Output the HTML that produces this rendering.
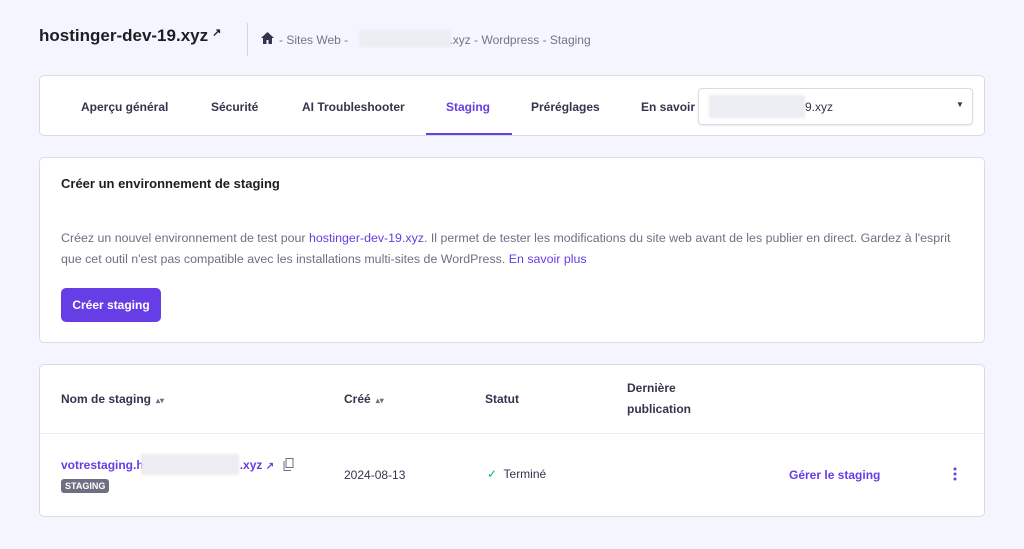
<!DOCTYPE html>
<html><head><meta charset="utf-8"><style>
*{box-sizing:border-box;margin:0;padding:0}
body{width:1024px;height:549px;background:#f4f5ff;font-family:"Liberation Sans",sans-serif;color:#2f1c6a;position:relative;overflow:hidden}
.a{position:absolute}
.card{position:absolute;left:39px;width:946px;background:#fff;border:1px solid #dadce0;border-radius:5px}
.tab{position:absolute;top:24px;font-size:12px;font-weight:bold;color:#36344d}
.p{color:#673de6}
.blur{position:absolute;background:#ececf3;filter:blur(1px)}
.th{position:absolute;font-size:12px;font-weight:bold;color:#36344d}
.sort{font-size:8px;color:#6d7081;margin-left:5px}
</style></head><body>
<div class="a" style="left:39px;top:26px;font-size:17px;font-weight:bold;color:#1d1e20">hostinger-dev-19.xyz<span style="font-size:11px;vertical-align:top;margin-left:4px">↗</span></div>
<div class="a" style="left:247px;top:23px;width:1px;height:33px;background:#d5d6dc"></div>
<svg class="a" style="left:261px;top:32px" width="13" height="12" viewBox="0 0 13 12"><path d="M6.5 0L0 6h2v6h3.5V8h2v4H11V6h2z" fill="#36344d"/></svg>
<div class="a" style="left:279px;top:33px;font-size:12px;color:#727586;white-space:nowrap">- Sites Web - <span style="display:inline-block;width:98px"></span>.xyz - Wordpress - Staging</div>
<div class="blur" style="left:359px;top:30px;width:92px;height:17px"></div>

<div class="card" style="top:75px;height:61px">
 <div class="tab" style="left:41px">Aperçu général</div>
 <div class="tab" style="left:171px">Sécurité</div>
 <div class="tab" style="left:262px">AI Troubleshooter</div>
 <div class="tab p" style="left:406px">Staging</div>
 <div class="a" style="left:386px;top:57px;width:86px;height:2px;background:#673de6"></div>
 <div class="tab" style="left:491px">Préréglages</div>
 <div class="tab" style="left:601px">En savoir p</div>
 <div class="a" style="left:658px;top:12px;width:275px;height:37px;border:1px solid #dadce0;border-radius:4px;background:#fff;box-shadow:0 1px 2px rgba(0,0,0,.08)">
  <div class="blur" style="left:10px;top:6px;width:96px;height:23px"></div>
  <div class="a" style="left:106px;top:11px;font-size:12px;color:#36344d">9.xyz</div>
  <div class="a" style="left:257px;top:11px;font-size:8px;color:#36344d">▼</div>
 </div>
</div>

<div class="card" style="top:157px;height:186px">
 <div class="a" style="left:21px;top:18px;font-size:13px;font-weight:bold;color:#1d1e20">Créer un environnement de staging</div>
 <div class="a" style="left:21px;top:70px;width:900px;font-size:12.4px;line-height:21px;color:#6d7081">Créez un nouvel environnement de test pour <span class="p">hostinger-dev-19.xyz</span>. Il permet de tester les modifications du site web avant de les publier en direct. Gardez à l'esprit que cet outil n'est pas compatible avec les installations multi-sites de WordPress. <span class="p">En savoir plus</span></div>
 <div class="a" style="left:21px;top:130px;width:100px;height:34px;background:#673de6;border-radius:5px;color:#fff;font-size:12px;font-weight:bold;text-align:center;line-height:34px">Créer staging</div>
</div>

<div class="card" style="top:364px;height:153px">
 <div class="th" style="left:21px;top:27px">Nom de staging<span class="sort">▴▾</span></div>
 <div class="th" style="left:304px;top:27px">Créé<span class="sort">▴▾</span></div>
 <div class="th" style="left:445px;top:27px">Statut</div>
 <div class="th" style="left:587px;top:13px;line-height:21px">Dernière<br>publication</div>
 <div class="a" style="left:0;top:68px;width:944px;height:1px;background:#ececf0"></div>
 <div class="a p" style="left:21px;top:93px;font-size:12px;font-weight:bold;white-space:nowrap">votrestaging.h<span style="display:inline-block;width:96px"></span>.xyz <span style="font-size:10px">↗</span></div>
 <div class="blur" style="left:101px;top:89px;width:98px;height:21px"></div>
 <svg class="a" style="left:243px;top:93px" width="11" height="13" viewBox="0 0 11 13"><rect x="3" y=".5" width="7" height="9" fill="none" stroke="#6d7081"/><path d="M1 3v9.5h7" fill="none" stroke="#6d7081"/></svg>
 <div class="a" style="left:21px;top:114px;background:#6d7081;color:#fff;font-size:9px;font-weight:bold;padding:2px 4px;border-radius:3px">STAGING</div>
 <div class="a" style="left:304px;top:103px;font-size:12px;color:#36344d">2024-08-13</div>
 <div class="a" style="left:447px;top:102px;font-size:12px;color:#36344d"><span style="color:#00b090">✓</span>&nbsp; Terminé</div>
 <div class="a p" style="left:749px;top:103px;font-size:12px;font-weight:bold">Gérer le staging</div>
 <svg class="a" style="left:912px;top:102px" width="6" height="14" viewBox="0 0 6 14"><circle cx="3" cy="2" r="1.5" fill="#673de6"/><circle cx="3" cy="7" r="1.5" fill="#673de6"/><circle cx="3" cy="12" r="1.5" fill="#673de6"/></svg>
</div>
</body></html>
